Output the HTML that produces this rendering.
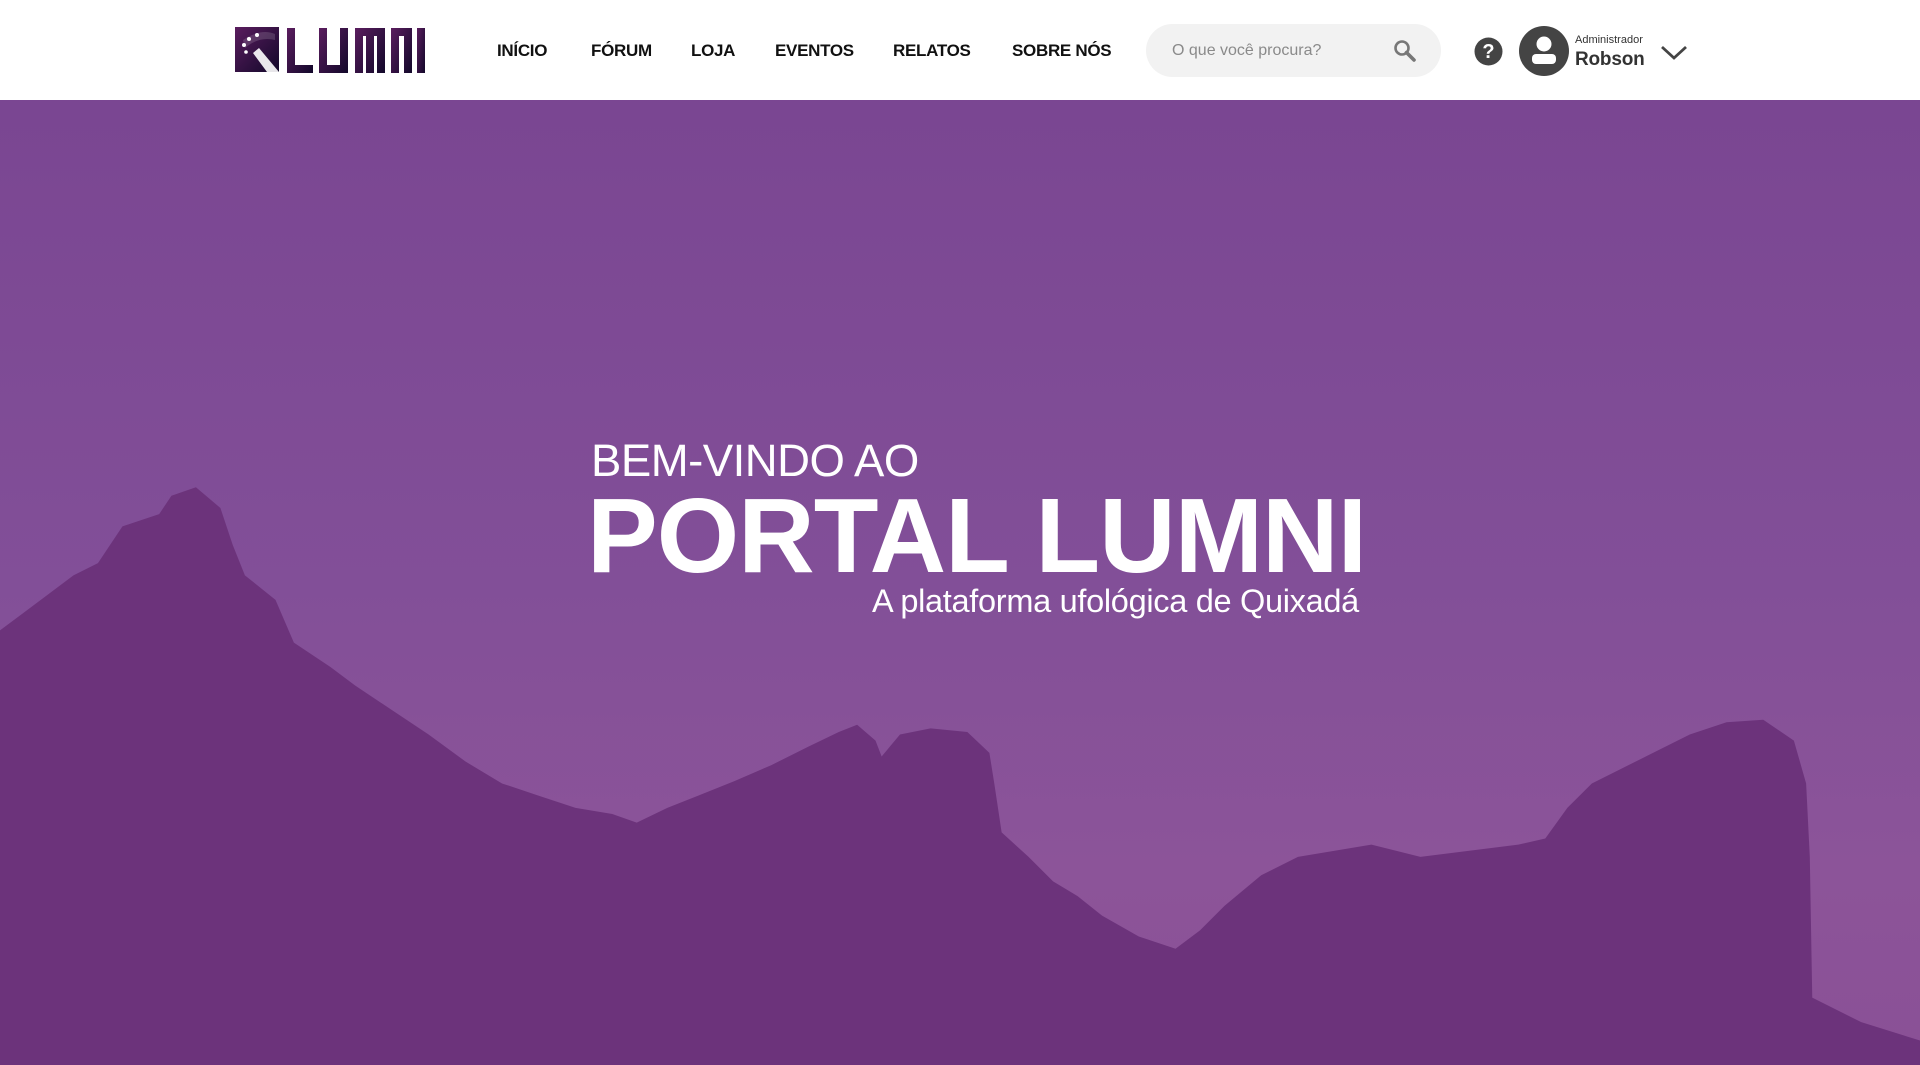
<!DOCTYPE html>
<html><head><meta charset="utf-8"><style>
*{margin:0;padding:0;box-sizing:border-box}
html,body{width:1920px;height:1065px;overflow:hidden;font-family:"Liberation Sans",sans-serif}
header{position:absolute;left:0;top:0;width:1920px;height:100px;background:#fff;z-index:2}
.nav a{position:absolute;top:41px;font-weight:bold;font-size:17px;color:#111;text-decoration:none;letter-spacing:-0.3px}
.search{position:absolute;left:1146px;top:24px;width:295px;height:53px;border-radius:27px;background:#f2f2f2}
.search span{position:absolute;left:26px;top:18px;font-size:16px;color:#8a8a8a}
.hero{position:absolute;left:0;top:100px;width:1920px;height:965px;background:linear-gradient(180deg,#7a4692 0%,#824f98 50%,#8c5499 80%,#8a5096 100%);overflow:hidden}
.t1{position:absolute;left:591px;top:335px;font-size:45.5px;color:#fff;font-weight:normal;letter-spacing:-0.5px}
.t2{position:absolute;left:587px;top:378px;font-size:106px;color:#fff;font-weight:bold;letter-spacing:-1px;line-height:1.1}
.t3{position:absolute;left:872px;top:483px;font-size:32.5px;color:#fff;letter-spacing:-0.3px}
</style></head><body>
<header>
<svg style="position:absolute;left:235px;top:26px" width="190" height="48" viewBox="0 0 190 48">
<defs><linearGradient id="g" x1="0" y1="0" x2="1" y2="1"><stop offset="0" stop-color="#5a1d5e"/><stop offset="1" stop-color="#12082a"/></linearGradient></defs>
<rect x="0" y="1" width="44" height="45" fill="url(#g)"/>
<path d="M8 14 Q26 2 40 8 L40 14 Q24 10 10 22 Z" fill="#fff" opacity="0.15"/>
<circle cx="9" cy="19" r="2" fill="#fff"/><circle cx="14" cy="13" r="2" fill="#fff"/><circle cx="22" cy="9" r="2" fill="#fff"/><circle cx="11" cy="26" r="1.8" fill="#fff"/>
<path d="M18 27 L24 22 L44 46 L32 46 Z" fill="#fff" opacity="0.9"/>
<g fill="url(#g)">
<path d="M52 2h8v37h18v8H52z"/>
<path d="M84 2h8v37h13V2h8v45H84z"/>
<path d="M120 2h30v45h-8V10h-3v37h-8V10h-3v37h-8z"/>
<path d="M156 2h21v45h-8V10h-5v37h-8z"/>
<path d="M182 2h8v45h-8z"/>
</g></svg>
<div class="nav">
<a style="left:497px">INÍCIO</a><a style="left:591px">FÓRUM</a><a style="left:691px">LOJA</a><a style="left:775px">EVENTOS</a><a style="left:893px">RELATOS</a><a style="left:1012px">SOBRE NÓS</a>
</div>
<div class="search"><span>O que você procura?</span>
<svg style="position:absolute;left:246px;top:14px" width="26" height="26" viewBox="0 0 26 26"><circle cx="10" cy="10" r="6.5" fill="none" stroke="#777" stroke-width="2.6"/><path d="M14.5 14.5 L22 22" stroke="#777" stroke-width="3.6" stroke-linecap="round"/></svg></div>
<svg style="position:absolute;left:1474px;top:37px" width="29" height="29" viewBox="0 0 29 29"><circle cx="14.5" cy="14.5" r="14" fill="#444"/><text x="14.5" y="21" text-anchor="middle" font-family="Liberation Sans" font-weight="bold" font-size="20" fill="#fff">?</text></svg>
<svg style="position:absolute;left:1519px;top:26px" width="50" height="50" viewBox="0 0 50 50"><circle cx="25" cy="25" r="25" fill="#444"/><circle cx="25" cy="18" r="7.5" fill="#fff"/><rect x="13" y="28" width="24" height="10" rx="4" fill="#fff"/></svg>
<div style="position:absolute;left:1575px;top:34px;font-size:11px;color:#333">Administrador</div>
<div style="position:absolute;left:1575px;top:49px;font-size:19px;color:#333;font-weight:bold;letter-spacing:-0.2px">Robson</div>
<svg style="position:absolute;left:1660px;top:45px" width="28" height="16" viewBox="0 0 28 16"><path d="M2 2 L14 13 L26 2" fill="none" stroke="#444" stroke-width="2.8"/></svg>
</header>
<div class="hero">
<svg style="position:absolute;left:0;top:-100px" width="1920" height="1065" viewBox="0 0 1568 870" preserveAspectRatio="none">
<path fill="#6c337b" d="M0 515 L20 500 L60 470 L80 460 L100 430 L130 420 L140 405 L160 398 L180 415 L190 445 L200 470 L225 490 L240 525 L255 535 L270 545 L290 560 L320 580 L350 600 L380 622 L410 640 L440 650 L470 660 L500 665 L520 672 L545 660 L570 650 L600 638 L630 625 L660 610 L685 598 L700 592 L715 605 L720 618 L735 600 L760 595 L790 598 L808 615 L812 640 L818 680 L840 700 L860 720 L880 732 L900 748 L930 765 L960 775 L980 760 L1000 740 L1030 715 L1060 700 L1090 695 L1120 690 L1160 700 L1200 695 L1240 690 L1262 685 L1280 660 L1300 640 L1340 620 L1380 600 L1410 590 L1440 588 L1465 605 L1475 640 L1478 700 L1480 815 L1520 835 L1568 850 L1568 870 L0 870 Z"/>
</svg>
<div class="t1">BEM-VINDO AO</div>
<div class="t2">PORTAL LUMNI</div>
<div class="t3">A plataforma ufológica de Quixadá</div>
</div>
</body></html>
